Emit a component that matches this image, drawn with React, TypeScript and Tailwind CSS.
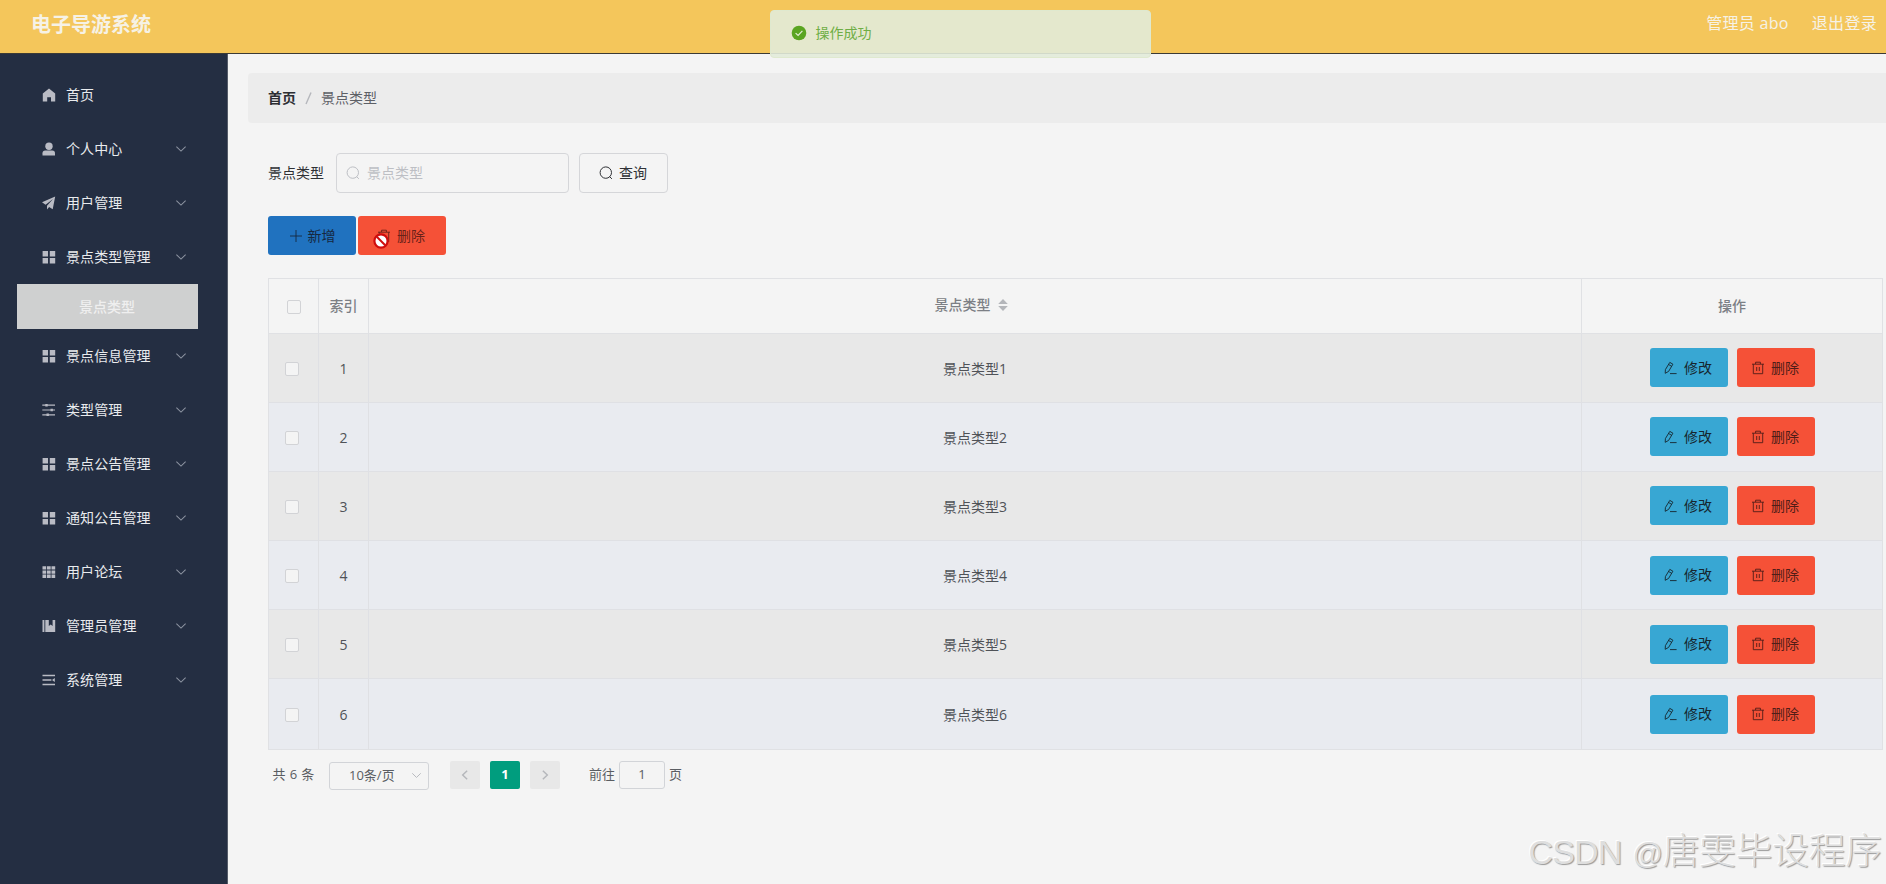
import type { ReactNode } from "react";

const rows = [1, 2, 3, 4, 5, 6];

function Svg({ className = "size-3.5", children }: { className?: string; children: ReactNode }) {
  return (
    <svg viewBox="0 0 14 14" className={`shrink-0 ${className}`} fill="none" stroke="currentColor">
      {children}
    </svg>
  );
}

const HomeIcon = () => (
  <Svg>
    <path d="M7 .4 13.2 5.6V13.4H9V9.2H5.2V13.4H.8V5.6Z" fill="currentColor" stroke="none" />
  </Svg>
);

const UserIcon = () => (
  <Svg>
    <circle cx="7" cy="4.2" r="3.7" fill="currentColor" stroke="none" />
    <path d="M.5 13.5V11.3Q.5 8.6 3.2 8.6H10.3Q13 8.6 13 11.3V13.5Z" fill="currentColor" stroke="none" />
  </Svg>
);

const PlaneIcon = () => (
  <Svg>
    <path d="M13.2.5 0 6.3 3.6 8.7 11 3 5 9.7V13.5L7.1 11 10.7 13.3Z" fill="currentColor" stroke="none" />
  </Svg>
);

const MenuIcon = () => (
  <Svg>
    <path d="M.6 1h5.4v5.4H.6ZM7.8 1h5.4v5.4H7.8ZM.6 8h5.4v5.4H.6ZM7.8 8h5.4v5.4H7.8Z" fill="currentColor" stroke="none" />
  </Svg>
);

const OperationIcon = () => (
  <Svg>
    <path d="M.3 2.2H13M.3 7H13M.3 11.8H13" strokeWidth="1.2" />
    <path d="M3.3 1H5.7V3.4H3.3ZM8.5 5.8H10.9V8.2H8.5ZM4.5 10.6H6.9V13H4.5Z" fill="currentColor" stroke="none" />
  </Svg>
);

const GridIcon = () => (
  <Svg>
    <path
      d="M.5 1.2h3.7v3.4H.5ZM5 1.2h3.7v3.4H5ZM9.5 1.2h3.7v3.4H9.5ZM.5 5.4h3.7v3.4H.5ZM5 5.4h3.7v3.4H5ZM9.5 5.4h3.7v3.4H9.5ZM.5 9.6h3.7V13H.5ZM5 9.6h3.7V13H5ZM9.5 9.6h3.7V13H9.5Z"
      fill="currentColor"
      stroke="none"
    />
  </Svg>
);

const ManagementIcon = () => (
  <Svg>
    <path d="M.5 1H2.4V13H.5ZM3.3 1H6.8V7L8.7 5.4 10.6 7V1H13.2V13H3.3Z" fill="currentColor" stroke="none" />
  </Svg>
);

const FoldIcon = () => (
  <Svg>
    <path d="M.5 2.5H13M.5 7H9.4M.5 11.5H13" strokeWidth="1.4" />
    <path d="M12.8 4.9V9.1L10 7Z" fill="currentColor" stroke="none" />
  </Svg>
);

const ChevronDown = ({ className = "size-3" }: { className?: string }) => (
  <Svg className={className}>
    <path d="M1.6 4.2 7 9.5 12.4 4.2" strokeWidth="1.2" />
  </Svg>
);

const SearchIcon = () => (
  <Svg>
    <circle cx="6.8" cy="6.6" r="5.7" />
    <path d="M10.6 10.6 12.9 12.9" />
  </Svg>
);

const PlusIcon = () => (
  <Svg>
    <path d="M7 1V13M1 7H13" strokeWidth=".9" />
  </Svg>
);

const TrashIcon = () => (
  <Svg>
    <path d="M1 3.2H13M2.3 3.2V12.7H11.7V3.2M4.6 3V1.2H9.4V3M5.7 6V10M8.3 6V10" strokeWidth=".9" />
  </Svg>
);

const EditIcon = () => (
  <Svg>
    <path d="M5.8 1.4 8.9 3.2 4.6 10.4 1.2 12.3 1.4 8.6ZM4.6 3.5 7.6 5.3M6 12.6H12.6" strokeWidth=".9" />
  </Svg>
);

type MenuItem = { label: string; icon: () => ReactNode; leaf?: boolean; child?: string };

const menu: MenuItem[] = [
  { label: "首页", icon: HomeIcon, leaf: true },
  { label: "个人中心", icon: UserIcon },
  { label: "用户管理", icon: PlaneIcon },
  { label: "景点类型管理", icon: MenuIcon, child: "景点类型" },
  { label: "景点信息管理", icon: MenuIcon },
  { label: "类型管理", icon: OperationIcon },
  { label: "景点公告管理", icon: MenuIcon },
  { label: "通知公告管理", icon: MenuIcon },
  { label: "用户论坛", icon: GridIcon },
  { label: "管理员管理", icon: ManagementIcon },
  { label: "系统管理", icon: FoldIcon },
];

function Sidebar() {
  return (
    <aside className="w-[227.5px] shrink-0 border-r border-[#555c69] bg-[#242e42] pt-3.5">
      {menu.map(({ label, icon: Icon, leaf, child }) => (
        <div key={label}>
          <div className="flex h-[54.1px] items-center pr-10 pl-[42px] text-[#e9ebee]">
            <span className="text-[#b9bbc4]"><Icon /></span>
            <span className="ml-2.5 flex-1 tracking-[.1px]">{label}</span>
            {!leaf && <span className="text-[#8c93a1]"><ChevronDown /></span>}
          </div>
          {child && (
            <div className="ml-[17px] flex h-[44.3px] w-[181px] items-center bg-[#cfd0d0] pl-[62px] font-medium text-[#efefef]">
              {child}
            </div>
          )}
        </div>
      ))}
    </aside>
  );
}

function Checkbox() {
  return <span className="block size-3.5 rounded-xs border border-[#d2d3d6] bg-[#f4f4f4]" />;
}

function Table() {
  return (
    <div className="mt-[22.5px] w-[1615px] border border-[#e0e1e4] text-[#4f5257]">
      <div className="grid h-[55px] grid-cols-[50px_50px_1213px_1fr] divide-x divide-[#e0e1e4] border-b border-[#e0e1e4] font-medium text-[#7c7f85]">
        <div className="flex items-center justify-center pt-0.5"><Checkbox /></div>
        <div className="flex items-center justify-center">索引</div>
        <div className="flex items-center justify-center gap-[7px] pr-2 pb-0.5">
          景点类型
          <svg viewBox="0 0 10 12" className="h-3 w-2.5" fill="#b4b6ba">
            <path d="M5 0 9.8 5H.2ZM5 12 .2 7H9.8Z" />
          </svg>
        </div>
        <div className="flex items-center justify-center">操作</div>
      </div>
      {rows.map((n) => (
        <div
          key={n}
          className={`grid h-[69.2px] grid-cols-[50px_50px_1213px_1fr] divide-x divide-[#dfe0e4] border-b border-[#dfe0e4] last:border-b-0 ${n % 2 ? "bg-[#e8e8e8]" : "bg-[#e9ebf0]"}`}
        >
          <div className="flex items-center justify-center pt-0.5 pr-[3px]"><Checkbox /></div>
          <div className="flex items-center justify-center pt-0.5">{n}</div>
          <div className="flex items-center justify-center pt-0.5">景点类型{n}</div>
          <div className="flex items-center justify-center gap-[9px] text-[#16262e]">
            <button className="flex h-[39px] w-[78px] items-center justify-center gap-1.5 rounded-[3px] bg-[#38a7d3] pr-px">
              <EditIcon />修改
            </button>
            <button className="flex h-[39px] w-[78px] items-center justify-center gap-1.5 rounded-[3px] bg-[#f55137] pr-px text-[#501d18]">
              <TrashIcon />删除
            </button>
          </div>
        </div>
      ))}
    </div>
  );
}

function Pagination() {
  return (
    <div className="mt-[11px] flex h-7 items-center pl-[4.5px] text-[13px] text-[#5a5d62]">
      <span className="w-[56.5px] tracking-[.4px]">共 6 条</span>
      <span className="mt-0.5 flex h-7 w-[100px] items-center rounded-[3px] border border-[#d2d4d8] pl-[19px]">
        <span className="w-[62px]">10条/页</span>
        <span className="text-[#b5b7bc]"><ChevronDown className="size-[11px]" /></span>
      </span>
      <span className="ml-[21px] flex h-7 w-[30px] items-center justify-center rounded-xs bg-[#e8e8e8] text-[#b5b7bb]">
        <Svg className="size-3"><path d="M9.5 2 4.3 7 9.5 12" strokeWidth="1.7" /></Svg>
      </span>
      <span className="ml-2.5 flex h-7 w-[30px] items-center justify-center rounded-xs bg-[#009d7e] font-bold text-white">1</span>
      <span className="ml-2.5 flex h-7 w-[30px] items-center justify-center rounded-xs bg-[#e8e8e8] text-[#b5b7bb]">
        <Svg className="size-3"><path d="M4.5 2 9.7 7 4.5 12" strokeWidth="1.7" /></Svg>
      </span>
      <span className="ml-[29px]">前往</span>
      <span className="ml-1 flex h-7 w-[46px] items-center justify-center rounded-[3px] border border-[#d2d4d8]">1</span>
      <span className="ml-1">页</span>
    </div>
  );
}

export default function App() {
  return (
    <div className="relative flex h-[884px] w-[1886px] flex-col overflow-hidden bg-[#f4f4f4] font-['Open_Sans','Noto_Sans_CJK_SC',sans-serif] text-sm">
      <header className="flex h-[54px] shrink-0 justify-between border-b border-[#3b3a35] bg-[#f4c65b] pr-[9px] pl-[31px] text-[#f6f2e6]">
        <h1 className="pt-[11px] text-xl leading-7 font-bold">电子导游系统</h1>
        <div className="flex gap-[23px] pt-[9px] text-base leading-7">
          <span className="tracking-[.3px]">管理员 abo</span>
          <span className="tracking-[.3px]">退出登录</span>
        </div>
      </header>

      <div className="flex min-h-0 flex-1">
        <Sidebar />
        <main className="min-w-0 flex-1 pt-[19px] pl-[20.5px]">
          <nav className="flex h-[50px] items-center rounded-l bg-[#ececec] pl-5 text-[#5d6066]">
            <span className="font-bold text-[#2c2e33]">首页</span>
            <svg viewBox="0 0 7 14" className="mx-[9px] h-3.5 w-[7px]" fill="none" stroke="#b5b7bc" strokeWidth="1.4">
              <path d="M6 1.5 1 13" />
            </svg>
            <span>景点类型</span>
          </nav>

          <div className="pt-[30px] pl-5">
            <div className="flex h-10 items-center text-[#2f3135]">
              <span>景点类型</span>
              <div className="ml-3 flex h-10 w-[233px] items-center gap-[7px] rounded border border-[#d5d6d9] pl-[9px] text-[#bdbfc4]">
                <SearchIcon />景点类型
              </div>
              <button className="ml-2.5 flex h-10 w-[89px] items-center justify-center gap-1.5 rounded border border-[#d5d6d9] pr-px">
                <SearchIcon />查询
              </button>
            </div>

            <div className="mt-[23px] flex gap-0.5">
              <button className="flex h-[39px] w-[88px] items-center justify-center gap-[5px] rounded-[3px] bg-[#2072bf] text-[#16283f]">
                <PlusIcon />新增
              </button>
              <button className="relative flex h-[39px] w-[88px] items-center justify-center gap-1.5 rounded-[3px] bg-[#f55137] pr-0.5 text-[#6a2219]">
                <TrashIcon />删除
                <svg viewBox="0 0 18 18" className="absolute top-4 left-3.5 size-[18px]">
                  <circle cx="9" cy="9" r="6.6" fill="#fff" stroke="#cf0d0d" strokeWidth="2.2" />
                  <path d="M4.8 4.8 13.2 13.2" stroke="#cf0d0d" strokeWidth="2" />
                </svg>
              </button>
            </div>

            <Table />
            <Pagination />
          </div>
        </main>
      </div>

      <div className="absolute top-2.5 left-[769.5px] flex h-12 w-[381px] items-center rounded border border-[#dfe9cf] bg-[#e2ebd9]/90 pb-0.5 pl-5 text-[#6fae45]">
        <svg viewBox="0 0 16 16" className="size-4">
          <circle cx="8" cy="8" r="7.3" fill="#5aa521" />
          <path d="M4.6 8.1 7.1 10.5 11.4 5.9" fill="none" stroke="#e4eed6" strokeWidth="1.2" />
        </svg>
        <span className="ml-[9px]">操作成功</span>
      </div>

      <div className="absolute right-1 bottom-[3px] flex items-baseline text-[36.5px] leading-[54px] font-light whitespace-nowrap text-[#dedede] [font-family:'Liberation_Sans','Noto_Sans_CJK_SC',sans-serif] [text-shadow:1px_1px_1px_#9a9a9a,-1px_-1px_0_#fff]">
        <span className="mr-[11px] text-[34px] tracking-[-.8px]">CSDN</span>
        <span className="text-[30px]">@</span>
        <span>唐雯毕设程序</span>
      </div>
    </div>
  );
}
